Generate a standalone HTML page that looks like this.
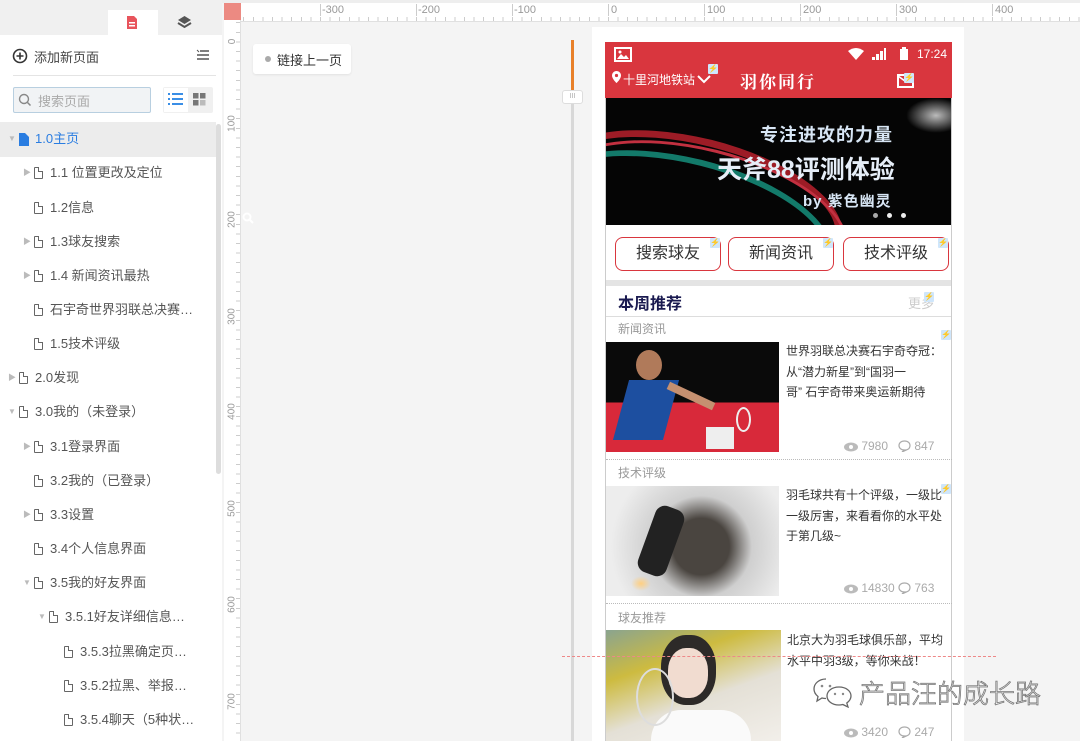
<!DOCTYPE html>
<html><head><meta charset="utf-8"><style>
*{margin:0;padding:0;box-sizing:border-box}
body{width:1080px;height:741px;overflow:hidden;position:relative;background:#f4f4f4;font-family:"Liberation Sans","Noto Sans CJK SC",sans-serif;font-size:13px;color:#555}
.a{position:absolute}
.ti{position:absolute;left:0;width:216px;height:34px;line-height:34px;white-space:nowrap;color:#555;font-size:13px}
.ti .ar{position:absolute;top:0;font-size:8px;color:#bbb}
.ti .ic{position:absolute;top:11px;width:9px;height:12px;border:1.3px solid #666;border-radius:1px}
.ti .ic:after{content:"";position:absolute;right:-1px;top:-1px;width:4px;height:4px;background:#fff;border-left:1.3px solid #666;border-bottom:1.3px solid #666}
.ti .tx{position:absolute;top:0}
.bolt{position:absolute;width:10px;height:10px;background:#cfe6fb;border-radius:1px;color:#2a7de1;font-size:8px;line-height:10px;text-align:center}
.btn{position:absolute;top:237px;height:34px;border:1px solid #d9363e;border-radius:8px;font-size:16px;color:#333;text-align:center;line-height:32px;background:#fff}
.cat{position:absolute;left:618px;font-size:12px;color:#999}
.art{position:absolute;font-size:12px;color:#333;line-height:20.5px;white-space:nowrap}
.st{position:absolute;font-size:12px;color:#aaa;white-space:nowrap}
.st svg{vertical-align:-2px}
.dash{position:absolute;left:606px;width:346px;border-top:1px dotted #bbb}
</style></head><body>
<div class="a" style="left:0;top:0;width:222px;height:741px;background:#fff"></div>
<div class="a" style="left:0;top:0;width:222px;height:35px;background:#f0f0f0"></div>
<div class="a" style="left:108px;top:10px;width:50px;height:25px;background:#fff"></div>
<svg class="a" style="left:126px;top:15px" width="12" height="15"><path d="M1 1h7l3 3v10H1z" fill="#e8545c"/><rect x="3" y="7" width="6" height="1.5" fill="#fff"/><rect x="3" y="10" width="6" height="1.5" fill="#fff"/></svg>
<svg class="a" style="left:177px;top:15px" width="15" height="14"><path d="M7.5 1L14 5 7.5 9 1 5z" fill="#555"/><path d="M1 8l6.5 4L14 8" fill="none" stroke="#555" stroke-width="2"/></svg>
<svg class="a" style="left:12px;top:48px" width="16" height="16"><circle cx="8" cy="8" r="6.5" fill="none" stroke="#333" stroke-width="1.6"/><path d="M8 4.5v7M4.5 8h7" stroke="#333" stroke-width="1.6"/></svg>
<div class="a" style="left:34px;top:47px;font-size:13px;color:#444">添加新页面</div>
<svg class="a" style="left:196px;top:49px" width="14" height="12"><path d="M4 2h9M1 6h12M1 10h12" stroke="#555" stroke-width="1.4"/><path d="M1 1l2 2" stroke="#555"/></svg>
<div class="a" style="left:13px;top:75px;width:203px;border-top:1px solid #e4e4e4"></div>
<div class="a" style="left:13px;top:87px;width:138px;height:26px;border:1px solid #b8cfe0;background:#f1f3f5;border-radius:2px"></div>
<svg class="a" style="left:18px;top:93px" width="14" height="14"><circle cx="6" cy="6" r="4.5" fill="none" stroke="#888" stroke-width="1.4"/><path d="M9.5 9.5l3 3" stroke="#888" stroke-width="1.5"/></svg>
<div class="a" style="left:38px;top:91px;color:#aaa;font-size:13px">搜索页面</div>
<div class="a" style="left:163px;top:87px;width:50px;height:26px;background:#f0f0f0;border-radius:2px"></div>
<div class="a" style="left:164px;top:88px;width:24px;height:24px;background:#fff"></div>
<svg class="a" style="left:168px;top:92px" width="16" height="14"><g fill="#3a8ee6"><rect x="0" y="1" width="2" height="2"/><rect x="0" y="6" width="2" height="2"/><rect x="0" y="11" width="2" height="2"/><rect x="4" y="1" width="11" height="2"/><rect x="4" y="6" width="11" height="2"/><rect x="4" y="11" width="11" height="2"/></g></svg>
<svg class="a" style="left:193px;top:93px" width="13" height="13"><g fill="#777"><rect x="0" y="0" width="5.5" height="5.5"/><rect x="7" y="0" width="5.5" height="5.5"/><rect x="0" y="7" width="5.5" height="5.5"/><rect x="7" y="7" width="5.5" height="5.5" fill="#bbb"/></g></svg>
<div class="a" style="left:0;top:122px;width:216px;height:35px;background:#ececec"></div>
<div class="a" style="left:216px;top:124px;width:5px;height:350px;background:#ddd;border-radius:3px"></div>

<div class="ti" style="top:122px"><span class="ar" style="left:8px">▼</span><svg class="a" style="left:19px;top:11px" width="10" height="13"><path d="M0 0h6l4 4v9H0z" fill="#2a7de1"/></svg><span class="tx" style="left:35px;color:#2a7de1">1.0主页</span></div>
<div class="ti" style="top:156px"><span class="ar" style="left:23px">▶</span><span class="ic" style="left:34px"></span><span class="tx" style="left:50px">1.1 位置更改及定位</span></div>
<div class="ti" style="top:191px"><span class="ic" style="left:34px"></span><span class="tx" style="left:50px">1.2信息</span></div>
<div class="ti" style="top:225px"><span class="ar" style="left:23px">▶</span><span class="ic" style="left:34px"></span><span class="tx" style="left:50px">1.3球友搜索</span></div>
<div class="ti" style="top:259px"><span class="ar" style="left:23px">▶</span><span class="ic" style="left:34px"></span><span class="tx" style="left:50px">1.4 新闻资讯最热</span></div>
<div class="ti" style="top:293px"><span class="ic" style="left:34px"></span><span class="tx" style="left:50px">石宇奇世界羽联总决赛…</span></div>
<div class="ti" style="top:327px"><span class="ic" style="left:34px"></span><span class="tx" style="left:50px">1.5技术评级</span></div>
<div class="ti" style="top:361px"><span class="ar" style="left:8px">▶</span><span class="ic" style="left:19px"></span><span class="tx" style="left:35px">2.0发现</span></div>
<div class="ti" style="top:395px"><span class="ar" style="left:8px">▼</span><span class="ic" style="left:19px"></span><span class="tx" style="left:35px">3.0我的（未登录）</span></div>
<div class="ti" style="top:430px"><span class="ar" style="left:23px">▶</span><span class="ic" style="left:34px"></span><span class="tx" style="left:50px">3.1登录界面</span></div>
<div class="ti" style="top:464px"><span class="ic" style="left:34px"></span><span class="tx" style="left:50px">3.2我的（已登录）</span></div>
<div class="ti" style="top:498px"><span class="ar" style="left:23px">▶</span><span class="ic" style="left:34px"></span><span class="tx" style="left:50px">3.3设置</span></div>
<div class="ti" style="top:532px"><span class="ic" style="left:34px"></span><span class="tx" style="left:50px">3.4个人信息界面</span></div>
<div class="ti" style="top:566px"><span class="ar" style="left:23px">▼</span><span class="ic" style="left:34px"></span><span class="tx" style="left:50px">3.5我的好友界面</span></div>
<div class="ti" style="top:600px"><span class="ar" style="left:38px">▼</span><span class="ic" style="left:49px"></span><span class="tx" style="left:65px">3.5.1好友详细信息…</span></div>
<div class="ti" style="top:635px"><span class="ic" style="left:64px"></span><span class="tx" style="left:80px">3.5.3拉黑确定页…</span></div>
<div class="ti" style="top:669px"><span class="ic" style="left:64px"></span><span class="tx" style="left:80px">3.5.2拉黑、举报…</span></div>
<div class="ti" style="top:703px"><span class="ic" style="left:64px"></span><span class="tx" style="left:80px">3.5.4聊天（5种状…</span></div>

<div class="a" style="left:222px;top:0;width:858px;height:3px;background:#eee"></div>
<div class="a" style="left:224px;top:3px;width:856px;height:19px;background:#fff;border-bottom:1px solid #e0e0e0;background-image:repeating-linear-gradient(90deg,#ccc 0 1px,transparent 1px 9.6px);background-size:100% 5px;background-repeat:no-repeat;background-position:0 14px"></div>
<div class="a" style="left:224px;top:3px;width:17px;height:738px;background:#fff;border-right:1px solid #e0e0e0;background-image:repeating-linear-gradient(180deg,#ccc 0 1px,transparent 1px 9.6px);background-size:5px 100%;background-repeat:no-repeat;background-position:12px 0"></div>
<div class="a" style="left:224px;top:3px;width:17px;height:17px;background:#ec8a82"></div>
<div class="a" style="left:320px;top:4px;font-size:11px;color:#999;border-left:1px solid #ccc;padding-left:1px">-300</div>
<div class="a" style="left:416px;top:4px;font-size:11px;color:#999;border-left:1px solid #ccc;padding-left:1px">-200</div>
<div class="a" style="left:512px;top:4px;font-size:11px;color:#999;border-left:1px solid #ccc;padding-left:1px">-100</div>
<div class="a" style="left:608px;top:4px;font-size:11px;color:#999;border-left:1px solid #ccc;padding-left:2px">0</div>
<div class="a" style="left:704px;top:4px;font-size:11px;color:#999;border-left:1px solid #ccc;padding-left:2px">100</div>
<div class="a" style="left:800px;top:4px;font-size:11px;color:#999;border-left:1px solid #ccc;padding-left:2px">200</div>
<div class="a" style="left:896px;top:4px;font-size:11px;color:#999;border-left:1px solid #ccc;padding-left:2px">300</div>
<div class="a" style="left:992px;top:4px;font-size:11px;color:#999;border-left:1px solid #ccc;padding-left:2px">400</div>
<div class="a" style="left:224px;top:36px;width:17px;font-size:10px;color:#999;transform:rotate(-90deg);text-align:center">0</div>
<div class="a" style="left:217px;top:118px;width:30px;font-size:10px;color:#999;transform:rotate(-90deg);text-align:center">100</div>
<div class="a" style="left:217px;top:214px;width:30px;font-size:10px;color:#999;transform:rotate(-90deg);text-align:center">200</div>
<div class="a" style="left:217px;top:311px;width:30px;font-size:10px;color:#999;transform:rotate(-90deg);text-align:center">300</div>
<div class="a" style="left:217px;top:406px;width:30px;font-size:10px;color:#999;transform:rotate(-90deg);text-align:center">400</div>
<div class="a" style="left:217px;top:503px;width:30px;font-size:10px;color:#999;transform:rotate(-90deg);text-align:center">500</div>
<div class="a" style="left:217px;top:599px;width:30px;font-size:10px;color:#999;transform:rotate(-90deg);text-align:center">600</div>
<div class="a" style="left:217px;top:696px;width:30px;font-size:10px;color:#999;transform:rotate(-90deg);text-align:center">700</div>
<svg class="a" style="left:242px;top:212px" width="12" height="12"><circle cx="5" cy="5" r="3.5" fill="none" stroke="#fff" stroke-width="2"/><path d="M8 8l3 3" stroke="#fff" stroke-width="2"/></svg>

<div class="a" style="left:253px;top:44px;width:98px;height:30px;background:#fff;border-radius:3px;box-shadow:0 1px 2px rgba(0,0,0,.08)"></div>
<div class="a" style="left:265px;top:56px;width:6px;height:6px;border-radius:50%;background:#aaa"></div>
<div class="a" style="left:277px;top:50px;font-size:13px;color:#333">链接上一页</div>
<div class="a" style="left:571px;top:40px;width:3px;height:58px;background:#e8802a"></div>
<div class="a" style="left:571px;top:98px;width:3px;height:643px;background:#d8d8d8"></div>
<div class="a" style="left:562px;top:90px;width:21px;height:14px;background:#fff;border:1px solid #ddd;border-radius:3px;font-size:7px;color:#aaa;text-align:center;line-height:12px">III</div>

<div class="a" style="left:592px;top:27px;width:372px;height:714px;background:#fff"></div>
<div class="a" style="left:605px;top:42px;width:347px;height:699px;border-left:1px solid #ccc;border-right:1px solid #ccc"></div>
<div class="a" style="left:605px;top:42px;width:347px;height:56px;background:#d9363e"></div>
<svg class="a" style="left:614px;top:47px" width="18" height="15"><rect x="1" y="1" width="16" height="13" fill="none" stroke="#fff" stroke-width="2"/><path d="M3 12l4-5 3 3 2-2 3 4z" fill="#fff"/><circle cx="6" cy="5" r="1.5" fill="#fff"/></svg>
<svg class="a" style="left:848px;top:48px" width="16" height="12"><path d="M8 12L0 3Q8-3 16 3z" fill="#fff"/></svg>
<svg class="a" style="left:872px;top:48px" width="14" height="12"><path d="M0 12h3v-3H0zM4 12h3V6H4zM8 12h3V3H8zM12 12h2V0h-2z" fill="#fff"/></svg>
<svg class="a" style="left:900px;top:47px" width="8" height="13"><rect x="0" y="2" width="8" height="11" fill="#fff"/><rect x="2" y="0" width="4" height="2" fill="#fff"/></svg>
<div class="a" style="left:917px;top:47px;color:#fff;font-size:12px">17:24</div>
<svg class="a" style="left:612px;top:71px" width="9" height="12"><path d="M4.5 0C2 0 0 2 0 4.5 0 8 4.5 12 4.5 12S9 8 9 4.5C9 2 7 0 4.5 0z" fill="#fff"/><circle cx="4.5" cy="4.5" r="1.6" fill="#d9363e"/></svg>
<div class="a" style="left:623px;top:71px;color:#fff;font-size:12px">十里河地铁站</div>
<svg class="a" style="left:697px;top:74px" width="14" height="10"><path d="M1 2l6 6 6-6" fill="none" stroke="#fff" stroke-width="2"/></svg>
<div class="bolt" style="left:708px;top:64px">⚡</div>
<div class="a" style="left:740px;top:68px;color:#fff;font-size:17px;font-weight:bold;letter-spacing:2px;font-family:'Noto Serif CJK SC',serif">羽你同行</div>
<svg class="a" style="left:897px;top:72px" width="18" height="16"><rect x="1" y="3" width="15" height="12" fill="none" stroke="#fff" stroke-width="2"/><path d="M1 4l7 5 8-5" fill="none" stroke="#fff" stroke-width="1.6"/></svg>
<div class="bolt" style="left:904px;top:73px">⚡</div>

<div class="a" style="left:606px;top:98px;width:345px;height:127px;background:#050505;overflow:hidden">
 <div class="a" style="left:-60px;top:40px;width:300px;height:130px;border-radius:50%;border:7px solid #9d1c26;transform:rotate(14deg)"></div>
 <div class="a" style="left:-70px;top:60px;width:300px;height:130px;border-radius:50%;border:6px solid #137a6a;transform:rotate(14deg)"></div>
 <div class="a" style="left:-55px;top:50px;width:300px;height:130px;border-radius:50%;border:3px solid #c23040;transform:rotate(14deg)"></div>
 <div class="a" style="left:300px;top:0;width:60px;height:35px;background:radial-gradient(#bbb,transparent 70%)"></div>
</div>
<div class="a" style="left:760px;top:121px;color:#d8e6f5;font-size:18px;font-weight:bold;letter-spacing:1px">专注进攻的力量</div>
<div class="a" style="left:717px;top:150px;color:#e6eef8;font-size:25px;font-weight:bold">天斧88评测体验</div>
<div class="a" style="left:803px;top:190px;color:#d8e6f5;font-size:15px;font-weight:bold;letter-spacing:1px">by  紫色幽灵</div>
<div class="a" style="left:873px;top:213px;width:5px;height:5px;border-radius:50%;background:#aaa"></div>
<div class="a" style="left:887px;top:213px;width:5px;height:5px;border-radius:50%;background:#eee"></div>
<div class="a" style="left:901px;top:213px;width:5px;height:5px;border-radius:50%;background:#eee"></div>

<div class="btn" style="left:615px;width:106px">搜索球友</div>
<div class="btn" style="left:728px;width:106px">新闻资讯</div>
<div class="btn" style="left:843px;width:106px">技术评级</div>
<div class="bolt" style="left:710px;top:238px">⚡</div>
<div class="bolt" style="left:823px;top:238px">⚡</div>
<div class="bolt" style="left:938px;top:238px">⚡</div>

<div class="a" style="left:606px;top:280px;width:345px;height:6px;background:#e4e4e4"></div>
<div class="a" style="left:618px;top:290px;font-size:16px;font-weight:bold;color:#1a1a50">本周推荐</div>
<div class="a" style="left:908px;top:293px;font-size:13px;color:#ccc">更多</div>
<div class="bolt" style="left:924px;top:292px">⚡</div>
<div class="a" style="left:606px;top:316px;width:345px;border-top:1px solid #ddd"></div>

<div class="cat" style="top:320px">新闻资讯</div>
<div class="bolt" style="left:941px;top:330px">⚡</div>
<div class="a" style="left:606px;top:342px;width:173px;height:110px;background:linear-gradient(180deg,#0a0a0a 0 55%,#d8293a 55% 100%);overflow:hidden">
 <div class="a" style="left:30px;top:8px;width:26px;height:30px;border-radius:50%;background:#b07a5a"></div>
 <div class="a" style="left:15px;top:38px;width:50px;height:60px;background:#1d4fa0;transform:skewX(-15deg)"></div>
 <div class="a" style="left:60px;top:50px;width:50px;height:8px;background:#c59070;transform:rotate(25deg)"></div>
 <div class="a" style="left:130px;top:65px;width:15px;height:25px;border:2px solid #eee;border-radius:50%"></div>
 <div class="a" style="left:100px;top:85px;width:28px;height:22px;background:#eee"></div>
</div>
<div class="art" style="left:786px;top:341px">世界羽联总决赛石宇奇夺冠：<br>从“潜力新星”到“国羽一<br>哥” 石宇奇带来奥运新期待</div>
<div class="st" style="left:844px;top:439px"><svg width="14" height="10"><ellipse cx="7" cy="5" rx="7" ry="4.5" fill="#bbb"/><circle cx="7" cy="5" r="2" fill="#fff"/></svg> 7980 &nbsp; <svg width="13" height="12"><path d="M6.5 1C3 1 1 3 1 5.5S3 10 6.5 10L4 12l5-2.3c2-.7 3-2.3 3-4.2C12 3 10 1 6.5 1z" fill="none" stroke="#aaa" stroke-width="1.2"/></svg> 847</div>
<div class="dash" style="top:459px"></div>

<div class="cat" style="top:464px">技术评级</div>
<div class="bolt" style="left:941px;top:484px">⚡</div>
<div class="a" style="left:606px;top:486px;width:173px;height:110px;background:radial-gradient(circle at 55% 55%,#4a4540 0 25%,#cfcfcf 45%,#ededed 80%);overflow:hidden">
 <div class="a" style="left:25px;top:90px;width:20px;height:15px;background:radial-gradient(#ffcf80,transparent 70%)"></div>
 <div class="a" style="left:40px;top:20px;width:30px;height:70px;background:#222;transform:rotate(20deg);border-radius:10px"></div>
</div>
<div class="art" style="left:786px;top:485px">羽毛球共有十个评级，一级比<br>一级厉害，来看看你的水平处<br>于第几级~</div>
<div class="st" style="left:844px;top:581px"><svg width="14" height="10"><ellipse cx="7" cy="5" rx="7" ry="4.5" fill="#bbb"/><circle cx="7" cy="5" r="2" fill="#fff"/></svg> 14830 <svg width="13" height="12"><path d="M6.5 1C3 1 1 3 1 5.5S3 10 6.5 10L4 12l5-2.3c2-.7 3-2.3 3-4.2C12 3 10 1 6.5 1z" fill="none" stroke="#aaa" stroke-width="1.2"/></svg> 763</div>
<div class="dash" style="top:603px"></div>

<div class="cat" style="top:609px">球友推荐</div>
<div class="a" style="left:606px;top:630px;width:175px;height:111px;background:linear-gradient(160deg,#8aa48f 0,#cdbb40 30%,#e4e0d6 60%,#f2efea 100%);overflow:hidden">
 <div class="a" style="left:55px;top:5px;width:55px;height:70px;border-radius:45%;background:#2d2a28"></div>
 <div class="a" style="left:62px;top:18px;width:40px;height:50px;border-radius:45%;background:#f1dcd0"></div>
 <div class="a" style="left:45px;top:80px;width:100px;height:40px;border-radius:30px 30px 0 0;background:#fafafa"></div>
 <div class="a" style="left:30px;top:38px;width:38px;height:58px;border:2px solid #ddd;border-radius:50%"></div>
</div>
<div class="art" style="left:787px;top:630px">北京大为羽毛球俱乐部，平均<br>水平中羽3级，等你来战！</div>
<div class="a" style="left:562px;top:656px;width:434px;border-top:1px dashed #e88"></div>
<div class="st" style="left:844px;top:725px"><svg width="14" height="10"><ellipse cx="7" cy="5" rx="7" ry="4.5" fill="#bbb"/><circle cx="7" cy="5" r="2" fill="#fff"/></svg> 3420 &nbsp; <svg width="13" height="12"><path d="M6.5 1C3 1 1 3 1 5.5S3 10 6.5 10L4 12l5-2.3c2-.7 3-2.3 3-4.2C12 3 10 1 6.5 1z" fill="none" stroke="#aaa" stroke-width="1.2"/></svg> 247</div>

<svg class="a" style="left:812px;top:676px" width="44" height="32"><path d="M14 3C7 3 2 7.5 2 13c0 3 1.5 5.5 4 7.5L5 25l5-3c1.3.4 2.6.5 4 .5" fill="#fff" stroke="#666" stroke-width="1.3"/><path d="M27 11c-7 0-12 4-12 9s5 9 12 9c1.4 0 2.6-.2 3.8-.5L36 31l-1.2-4C37.5 25 39 22.7 39 20c0-5-5-9-12-9z" fill="#fff" stroke="#666" stroke-width="1.3"/><circle cx="10" cy="10" r="1.3" fill="#888"/><circle cx="18" cy="10" r="1.3" fill="#888"/><circle cx="23" cy="18" r="1.2" fill="#888"/><circle cx="31" cy="18" r="1.2" fill="#888"/></svg>
<div class="a" style="left:859px;top:674px;font-size:26px;color:#fff;-webkit-text-stroke:0.8px #777;font-weight:300">产品汪的成长路</div>
</body></html>
